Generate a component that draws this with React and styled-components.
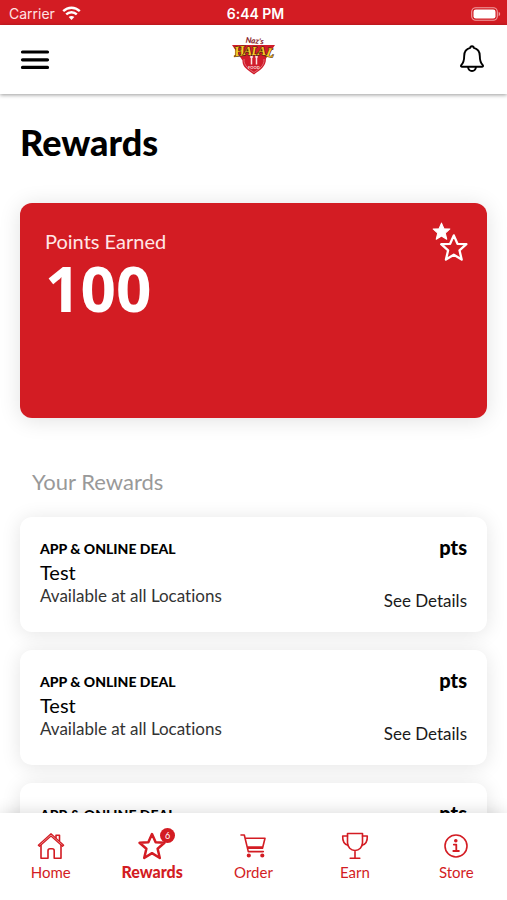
import React from 'react'
import styled, { createGlobalStyle, ThemeProvider } from 'styled-components'

const theme = {
  red: '#d31c23',
  font: "Lato, 'Open Sans', sans-serif",
}

const GlobalStyle = createGlobalStyle`
  * {
    box-sizing: border-box;
  }

  body {
    margin: 0;
    background: white;
    color: #000;
    font-family: ${props => props.theme.font};
    font-variant-ligatures: none;
  }
`

const Screen = styled.div`
  display: flex;
  flex-direction: column;
  height: 100vh;
`

const StatusBar = styled.div`
  display: grid;
  grid-template-columns: 1fr auto 1fr;
  align-items: center;
  height: 25px;
  padding: 2px 5px 0 9px;
  background: ${props => props.theme.red};
  color: white;
  font-family: Inter, sans-serif;
  font-size: 14px;
  flex-shrink: 0;

  svg {
    display: block;
  }
`

const Carrier = styled.div`
  display: flex;
  align-items: center;
  gap: 7px;
  color: #ffe3e3;
`

const Clock = styled.div`
  font-weight: 600;
`

const Battery = styled.div`
  justify-self: end;
`

const HeaderDiv = styled.header`
  display: grid;
  grid-template-columns: 1fr auto 1fr;
  align-items: center;
  height: 69px;
  padding: 0 20px;
  background: white;
  box-shadow: 0 1px 4px rgba(0, 0, 0, 0.4);
  flex-shrink: 0;
  z-index: 1;
`

const IconButton = styled.button`
  justify-self: ${props => props.$side};
  padding: 0;
  border: 0;
  background: none;
  color: black;
  cursor: pointer;

  svg {
    display: block;
  }
`

const Main = styled.main`
  flex: 1;
  min-height: 0;
  overflow-y: auto;
  scrollbar-width: none;
  padding: 28px 20px 20px;
`

const PageTitle = styled.h1`
  margin: 0 0 41px;
  font-size: 36px;
  line-height: 40px;
  font-weight: 900;
`

const PointsCard = styled.section`
  display: flex;
  justify-content: space-between;
  align-items: flex-start;
  min-height: 215px;
  padding: 18px 18px 24px 25px;
  border-radius: 12px;
  background: ${props => props.theme.red};
  color: white;
  box-shadow: 0 2px 22px rgba(0, 0, 0, 0.12);
`

const PointsLabel = styled.p`
  margin: 4px 0 0;
  font-size: 20px;
  line-height: 32px;
  color: #ffe6e6;
`

const PointsTotal = styled.p`
  margin: 0;
  font-family: 'Open Sans', sans-serif;
  font-size: 62px;
  line-height: 62px;
  font-weight: 700;
`

const SectionTitle = styled.h2`
  margin: 49px 12px 20px;
  font-size: 22px;
  line-height: 30px;
  font-weight: 400;
  color: #999;
`

const RewardList = styled.ul`
  display: flex;
  flex-direction: column;
  gap: 18px;
  margin: 0;
  padding: 0;
  list-style: none;
`

const RewardItem = styled.li`
  display: flex;
  justify-content: space-between;
  min-height: 115px;
  padding: 20px;
  border-radius: 12px;
  background: white;
  box-shadow: 0 2px 20px rgba(0, 0, 0, 0.11);
`

const RewardSide = styled.div`
  display: flex;
  flex-direction: column;
  justify-content: space-between;
  align-items: flex-end;
`

const Kind = styled.p`
  margin: 0;
  font-size: 14px;
  line-height: 24px;
  font-weight: 900;
`

const RewardName = styled.h3`
  margin: 0;
  font-size: 20px;
  line-height: 22px;
  font-weight: 400;
`

const Place = styled.p`
  margin: 0;
  font-size: 17px;
  line-height: 26px;
  color: #333;
`

const Points = styled.span`
  font-size: 20px;
  line-height: 20px;
  font-weight: 900;
`

const DetailsLink = styled.a`
  font-size: 17px;
  line-height: 22px;
  color: #1a1a1a;
  text-decoration: none;
`

const TabBar = styled.nav`
  position: relative;
  display: grid;
  grid-template-columns: repeat(5, 1fr);
  height: 87px;
  padding-top: 17px;
  background: white;
  box-shadow: 0 0 16px rgba(0, 0, 0, 0.16);
  flex-shrink: 0;
`

const Tab = styled.a`
  display: flex;
  flex-direction: column;
  align-items: center;
  color: ${props => props.theme.red};
  font-size: ${props => (props.$active ? '16px' : '15px')};
  line-height: 20px;
  font-weight: ${props => (props.$active ? 900 : 400)};
  text-decoration: none;
`

const TabIcon = styled.span`
  position: relative;
  height: 32px;

  svg {
    display: block;
  }
`

const Badge = styled.span`
  position: absolute;
  top: -2px;
  right: -7px;
  width: 15px;
  height: 15px;
  border-radius: 50%;
  background: ${props => props.theme.red};
  color: white;
  font-size: 9px;
  line-height: 15px;
  font-weight: 400;
  text-align: center;
`

const WifiIcon = () => (
  <svg width="19" height="15" viewBox="0 0 19 15" fill="none" stroke="white" strokeWidth="2.4">
    <path d="M1.2 5.2C6 .6 13 .6 17.8 5.2" />
    <path d="M4.2 8.4c3-2.9 7.600-2.900 10.600 0" />
    <path d="M9.500 14 6.700 11.100c1.600-1.500 4-1.500 5.600 0z" fill="white" stroke="none" />
  </svg>
)

const BatteryIcon = () => (
  <svg width="31" height="14" viewBox="0 0 31 14">
    <rect x=".7" y=".7" width="25.600" height="12.600" rx="4" fill="none" stroke="#f0a0a3" strokeWidth="1.100" />
    <rect x="2.500" y="2.500" width="22" height="9" rx="2.300" fill="white" />
    <path d="M27.700 4.800c2 .8 2 3.600 0 4.400z" fill="#f0a0a3" />
  </svg>
)

const MenuIcon = () => (
  <svg width="30" height="22" viewBox="0 0 30 22" stroke="black" strokeWidth="3.200" strokeLinecap="round">
    <path d="M2.500 3h25M2.500 10.800h25M2.500 18.400h25" />
  </svg>
)

const BellIcon = () => (
  <svg width="30" height="32" viewBox="0 0 30 32" fill="none" stroke="black" strokeWidth="1.900" strokeLinejoin="round">
    <path d="M13.200 3.900c.1-2.300 3.500-2.300 3.600 0 4 .9 6 4 6 8.100 0 5.200 1 7.200 3 9.200.6.800.3 1.500-.6 1.500H4.800c-.9 0-1.200-.7-.6-1.500 2-2 3-4 3-9.200 0-4.100 2-7.200 6-8.100z" />
    <path d="M11 23c.6 5.300 7.400 5.300 8 0" />
  </svg>
)

const Logo = () => (
  <svg width="46" height="48" viewBox="0 0 46 48" role="img" aria-label="Naz's Halal Food">
    <path d="M1 9H44L35 22.500C35 31 29 34 23 38.500 17 34 11 31 11.500 24.500z" fill="#d01c2b" />
    <path d="M13 23c-.5 7 5 10 10 13.500C28 33 33.500 30 33 23" fill="none" stroke="#f0a0a5" strokeWidth=".6" />
    <path d="M20.500 20v8.500M25.500 20v8.500" stroke="#fbe3e3" strokeWidth="1.500" />
    <path d="M19.400 18.500v3h2.200v-3M24.700 18.500v3h1.600v-3z" fill="none" stroke="#fbe3e3" strokeWidth=".8" />
    <text x="23" y="33" textAnchor="middle" fontFamily="Lato, sans-serif" fontSize="4" fontWeight="900" fill="#f8dada">FOOD</text>
    <text x="23.500" y="7.500" textAnchor="middle" fontFamily="Lato, sans-serif" fontSize="8" fontWeight="900" fontStyle="italic" fill="#8c1f2e" transform="rotate(5 23 7)">Naz's</text>
    <g fontFamily="Liberation Serif, serif" fontWeight="700" fontStyle="italic" fill="#fbc926" stroke="#4a2508" strokeWidth="1.200" paintOrder="stroke">
      <text x="3.500" y="20" fontSize="14" transform="rotate(-8 7 19)">H</text>
      <text x="12.500" y="18.500" fontSize="13">A</text>
      <text x="20.500" y="18.500" fontSize="12">L</text>
      <text x="26.500" y="18.500" fontSize="13">A</text>
      <text x="34.500" y="20.500" fontSize="13" transform="rotate(12 37 20)">L</text>
    </g>
  </svg>
)

const STAR = 'M0-12 3.500-4 12-3.600 5.400 2.200 7.500 11 0 6.400-7.500 11-5.400 2.200-12-3.600-3.500-4z'

const StarsIcon = () => (
  <svg width="38" height="42" viewBox="0 0 38 42">
    <path d={STAR} transform="translate(10.500 10.500) scale(.7)" fill="white" stroke="white" strokeWidth="1.500" strokeLinejoin="round" />
    <path d={STAR} transform="translate(22.800 27) scale(1.050)" fill={theme.red} stroke="white" strokeWidth="2.200" strokeLinejoin="round" />
  </svg>
)

const TabSvg = ({ width = 1.6, children }) => (
  <svg width="32" height="32" viewBox="0 0 32 32" fill="none" stroke="currentColor" strokeWidth={width} strokeLinejoin="round" strokeLinecap="round">
    {children}
  </svg>
)

const HomeIcon = () => (
  <TabSvg>
    <path d="M3.300 15.200 16 3.700l12.700 11.500-1.200 1.100L16 6 4.500 16.300z" strokeWidth="1.200" />
    <path d="M6 15.500v12.700h7v-7.500c0-1.200.8-2 2-2h2.200c1.200 0 2 .8 2 2v7.500H26V15.500" />
    <path d="M21 7.500V5.300h3.500v5.400" />
  </TabSvg>
)

const RewardsIcon = () => (
  <TabSvg width={2.4}>
    <path d={STAR} transform="translate(16 16.500) scale(1.040)" />
  </TabSvg>
)

const CartIcon = () => (
  <TabSvg>
    <path d="M4 5h3.300l4 16.600h15M8.300 8.300H28l-2.500 10H10.800M10.500 17h15.300" />
    <circle cx="11.800" cy="25.500" r="1.300" fill="currentColor" />
    <circle cx="25.300" cy="25.500" r="1.300" fill="currentColor" />
  </TabSvg>
)

const TrophyIcon = () => (
  <TabSvg>
    <path d="M8.500 3.500h15v9c0 4.800-3.300 8-7.500 8s-7.500-3.200-7.500-8zM16 20.500v7.700M11.200 28.300h9.600" />
    <path d="M8.500 6H3.700c-.2 4.500 1.500 8.300 5.300 9.300M23.500 6h4.800c.2 4.500-1.500 8.300-5.300 9.300" />
  </TabSvg>
)

const InfoIcon = () => (
  <TabSvg>
    <circle cx="16" cy="16" r="11" />
    <circle cx="15.800" cy="10.800" r="1" fill="currentColor" />
    <path d="M13.800 14.600h2.500v6.200M13.300 21h5.600" strokeWidth="1.800" />
  </TabSvg>
)

const rewards = [1, 2, 3].map(id => ({
  id,
  kind: 'APP & ONLINE DEAL',
  name: 'Test',
  place: 'Available at all Locations',
}))

const tabs = [
  { label: 'Home', Icon: HomeIcon },
  { label: 'Rewards', Icon: RewardsIcon, active: true, badge: 6 },
  { label: 'Order', Icon: CartIcon },
  { label: 'Earn', Icon: TrophyIcon },
  { label: 'Store', Icon: InfoIcon },
]

const Reward = ({ reward }) => {
  return (
    <RewardItem>
      <div>
        <Kind>{reward.kind}</Kind>
        <RewardName>{reward.name}</RewardName>
        <Place>{reward.place}</Place>
      </div>
      <RewardSide>
        <Points>pts</Points>
        <DetailsLink href="#details">See Details</DetailsLink>
      </RewardSide>
    </RewardItem>
  )
}

const App = () => {
  return (
    <ThemeProvider theme={theme}>
      <GlobalStyle />
      <Screen>
        <StatusBar>
          <Carrier>Carrier <WifiIcon /></Carrier>
          <Clock>6:44 PM</Clock>
          <Battery><BatteryIcon /></Battery>
        </StatusBar>
        <HeaderDiv>
          <IconButton $side="start" aria-label="Menu"><MenuIcon /></IconButton>
          <Logo />
          <IconButton $side="end" aria-label="Notifications"><BellIcon /></IconButton>
        </HeaderDiv>
        <Main>
          <PageTitle>Rewards</PageTitle>
          <PointsCard>
            <div>
              <PointsLabel>Points Earned</PointsLabel>
              <PointsTotal>100</PointsTotal>
            </div>
            <StarsIcon />
          </PointsCard>
          <SectionTitle>Your Rewards</SectionTitle>
          <RewardList>
            {rewards.map(reward => <Reward key={reward.id} reward={reward} />)}
          </RewardList>
        </Main>
        <TabBar>
          {tabs.map(({ label, Icon, active, badge }) => (
            <Tab key={label} href={`#${label.toLowerCase()}`} $active={active}>
              <TabIcon>
                <Icon />
                {badge && <Badge>{badge}</Badge>}
              </TabIcon>
              {label}
            </Tab>
          ))}
        </TabBar>
      </Screen>
    </ThemeProvider>
  )
}

export default App
